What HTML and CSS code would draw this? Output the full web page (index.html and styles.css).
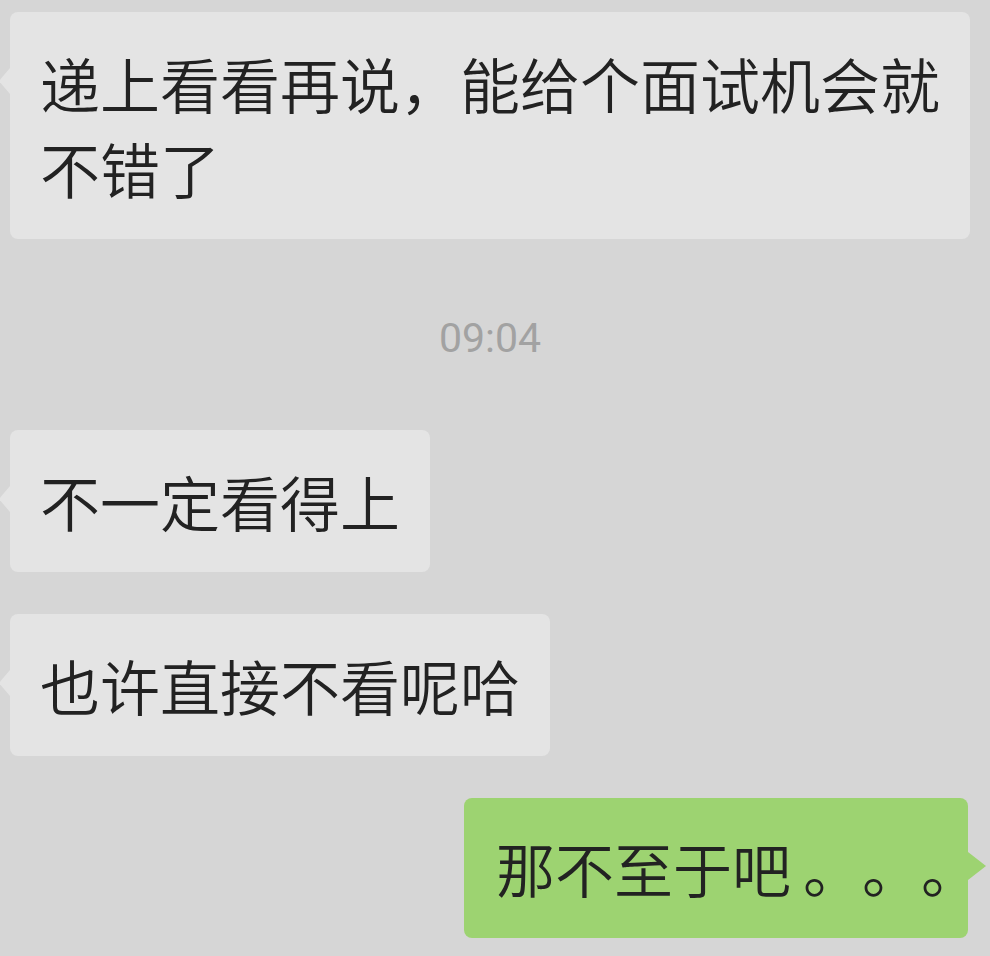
FILE: index.html
```html
<!DOCTYPE html>
<html lang="zh-CN">
<head>
    <meta charset="UTF-8">
    <meta name="viewport" content="width=device-width, initial-scale=1.0">
    <title>聊天记录</title>
    <link rel="stylesheet" href="styles.css">
</head>
<body>
    <div class="chat">
        <div class="row">
            <div class="bubble">递上看看再说，能给个面试机会就不错了</div>
        </div>

        <div class="time">09:04</div>

        <div class="row">
            <div class="bubble">不一定看得上</div>
        </div>
        <div class="row gap">
            <div class="bubble">也许直接不看呢哈</div>
        </div>

        <div class="row mine gap">
            <div class="bubble green">那不至于吧<span class="dots">。。。</span></div>
        </div>
    </div>
</body>
</html>
```

FILE: styles.css
```css
body {
    margin: 0;
    background-color: #d6d6d6;
    font-family: "Noto Sans CJK SC", "Noto Sans", sans-serif;
    color: #222;
}
.chat {
    display: flex;
    flex-direction: column;
    padding: 12px 20px 0 10px;
}
.row {
    display: flex;
    justify-content: flex-start;
}
.row.gap {
    margin-top: 42px;
}
.row.mine {
    justify-content: flex-end;
    margin-right: 2px;
}
.bubble {
    position: relative;
    max-width: 100%;
    box-sizing: border-box;
    background-color: #e4e4e4;
    border-radius: 8px;
    padding: 28px 30px 29px 30px;
    font-size: 60px;
    font-weight: 350;
    line-height: 85px;
    text-spacing-trim: space-all;
}
.bubble::before {
    content: "";
    position: absolute;
    top: 56px;
    left: -11px;
    border-style: solid;
    border-width: 13px 11px 13px 0;
    border-color: transparent #e4e4e4 transparent transparent;
}
.bubble.green {
    background-color: #9dd371;
    font-size: 59px;
    padding: 27px 0 28px 32px;
    white-space: nowrap;
}
.bubble.green::before {
    left: auto;
    right: -18px;
    top: 54px;
    border-width: 14px 0 14px 18px;
    border-color: transparent transparent transparent #9dd371;
}
.dots {
    margin: 0 -12px 0 12px;
}
.time {
    margin: 79px 0 71px;
    text-align: center;
    font-family: Roboto, "Liberation Sans", sans-serif;
    font-size: 41px;
    line-height: 41px;
    color: #a2a2a2;
}
```
